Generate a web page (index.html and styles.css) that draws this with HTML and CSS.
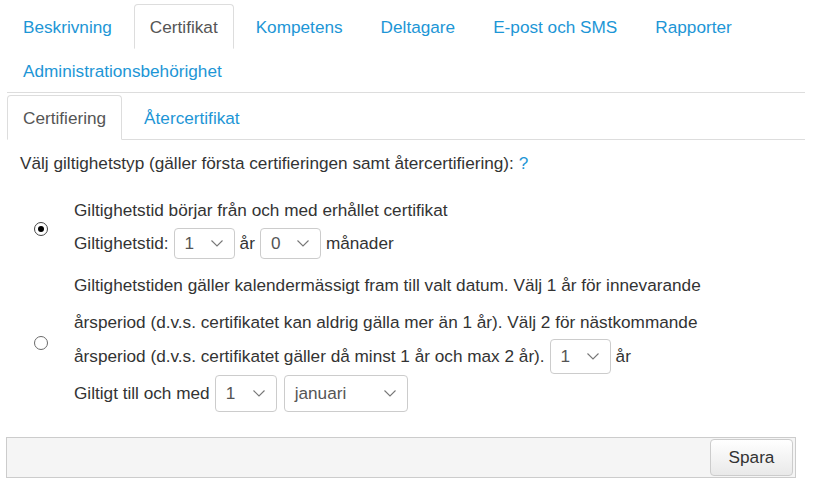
FILE: index.html
```html
<!DOCTYPE html>
<html lang="sv">
<head>
<meta charset="utf-8">
<title>Certifikat</title>
<link rel="stylesheet" href="styles.css">
</head>
<body>
<div class="page">
  <ul class="tabs main-tabs">
    <li><a href="#">Beskrivning</a></li>
    <li class="active"><a href="#">Certifikat</a></li>
    <li><a href="#">Kompetens</a></li>
    <li><a href="#">Deltagare</a></li>
    <li><a href="#">E-post och SMS</a></li>
    <li><a href="#">Rapporter</a></li>
    <li><a href="#">Administrationsbehörighet</a></li>
  </ul>
  <ul class="tabs sub-tabs">
    <li class="active"><a href="#">Certifiering</a></li>
    <li><a href="#">Återcertifikat</a></li>
  </ul>

  <p class="intro">Välj giltighetstyp (gäller första certifieringen samt återcertifiering): <a class="help" href="#">?</a></p>

  <div class="option opt1">
    <span class="radio checked"></span>
    <div class="opt-text">
      <div class="line">Giltighetstid börjar från och med erhållet certifikat</div>
      <div class="row row-a">
        <span>Giltighetstid:</span>
        <span class="sel sel-a"><span>1</span><svg class="chev" width="12" height="7" viewBox="0 0 12 7"><polyline points="0.5,0.5 6,6 11.5,0.5"/></svg></span>
        <span>år</span>
        <span class="sel sel-a"><span>0</span><svg class="chev" width="12" height="7" viewBox="0 0 12 7"><polyline points="0.5,0.5 6,6 11.5,0.5"/></svg></span>
        <span>månader</span>
      </div>
    </div>
  </div>

  <div class="option opt2">
    <span class="radio"></span>
    <div class="opt-text">
      <div class="line">Giltighetstiden gäller kalendermässigt fram till valt datum. Välj 1 år för innevarande</div>
      <div class="line line-2">årsperiod (d.v.s. certifikatet kan aldrig gälla mer än 1 år). Välj 2 för nästkommande</div>
      <div class="row row-b">
        <span>årsperiod (d.v.s. certifikatet gäller då minst 1 år och max 2 år).</span>
        <span class="sel sel-b"><span>1</span><svg class="chev" width="12" height="7" viewBox="0 0 12 7"><polyline points="0.5,0.5 6,6 11.5,0.5"/></svg></span>
        <span>år</span>
      </div>
      <div class="row row-c">
        <span>Giltigt till och med</span>
        <span class="sel sel-c"><span>1</span><svg class="chev" width="12" height="7" viewBox="0 0 12 7"><polyline points="0.5,0.5 6,6 11.5,0.5"/></svg></span>
        <span class="sel sel-month"><span>januari</span><svg class="chev" width="12" height="7" viewBox="0 0 12 7"><polyline points="0.5,0.5 6,6 11.5,0.5"/></svg></span>
      </div>
    </div>
  </div>

  <div class="footer">
    <button class="btn" type="button">Spara</button>
  </div>
</div>
</body>
</html>
```
FILE: styles.css
```css
html, body {
  margin: 0;
  padding: 0;
  background: #fff;
}
body {
  font-family: "Liberation Sans", Arial, sans-serif;
  font-size: 17.2px;
  color: #333;
}
.page {
  padding-left: 7px;
  width: 798px;
}
.tabs {
  list-style: none;
  margin: 0;
  padding: 0;
  display: flex;
  flex-wrap: wrap;
  border-bottom: 1px solid #ddd;
}
.main-tabs {
  margin-top: 4px;
}
.sub-tabs {
  padding-top: 2px;
}
.tabs li {
  margin: 0 6px -1px 0;
}
.tabs a {
  display: block;
  padding: 10px 15px 9px;
  line-height: 24px;
  border: 1px solid transparent;
  border-radius: 4px 4px 0 0;
  color: #1d96d6;
  text-decoration: none;
}
.tabs li.active a {
  color: #555;
  background: #fff;
  border-color: #ddd #ddd transparent;
}
.intro {
  margin: 11px 0 0 13px;
  line-height: 24px;
}
.help {
  color: #1d96d6;
  text-decoration: none;
}
.option {
  display: flex;
  align-items: center;
  padding-left: 27px;
}
.opt1 {
  margin-top: 23px;
}
.opt2 {
  margin-top: 14px;
}
.radio {
  flex: none;
  width: 14px;
  height: 14px;
  box-sizing: border-box;
  border: 1px solid #444;
  border-radius: 50%;
  background: #fff;
  position: relative;
}
.opt2 .radio {
  border-color: #6a6a6a;
}
.radio.checked::after {
  content: "";
  position: absolute;
  left: 3px;
  top: 3px;
  width: 6px;
  height: 6px;
  border-radius: 50%;
  background: #000;
}
.opt-text {
  margin-left: 26px;
}
.line {
  line-height: 24px;
  white-space: nowrap;
}
.line-2 {
  margin-top: 13px;
}
.row {
  display: flex;
  align-items: center;
  gap: 5px;
  white-space: nowrap;
}
.row-a {
  margin-top: 6px;
}
.row-b {
  margin-top: 5px;
}
.row-c {
  margin-top: 1px;
}
.sel {
  display: inline-flex;
  align-items: center;
  justify-content: space-between;
  box-sizing: border-box;
  border: 1px solid #ccc;
  border-radius: 4px;
  background: #fff;
  color: #555;
  padding: 0 11px 0 10px;
}
.sel-a {
  width: 61px;
  height: 31px;
}
.sel-b {
  width: 61px;
  height: 35px;
}
.sel-c {
  width: 62px;
  height: 37px;
}
.sel-month {
  width: 124px;
  height: 37px;
  margin-left: 2px;
}
.chev polyline {
  fill: none;
  stroke: #777;
  stroke-width: 1.1;
}
.footer {
  margin-top: 25px;
  margin-left: -1px;
  width: 790px;
  box-sizing: border-box;
  border: 1px solid #ccc;
  background: #f5f5f5;
  padding: 1px 2px 1px 0;
  display: flex;
  justify-content: flex-end;
}
.btn {
  font-family: "Liberation Sans", Arial, sans-serif;
  font-size: 17.2px;
  color: #333;
  width: 83px;
  height: 37px;
  border: 1px solid #ccc;
  border-radius: 4px;
  background: linear-gradient(#fff, #e9e9e9);
  padding: 0;
}
```
